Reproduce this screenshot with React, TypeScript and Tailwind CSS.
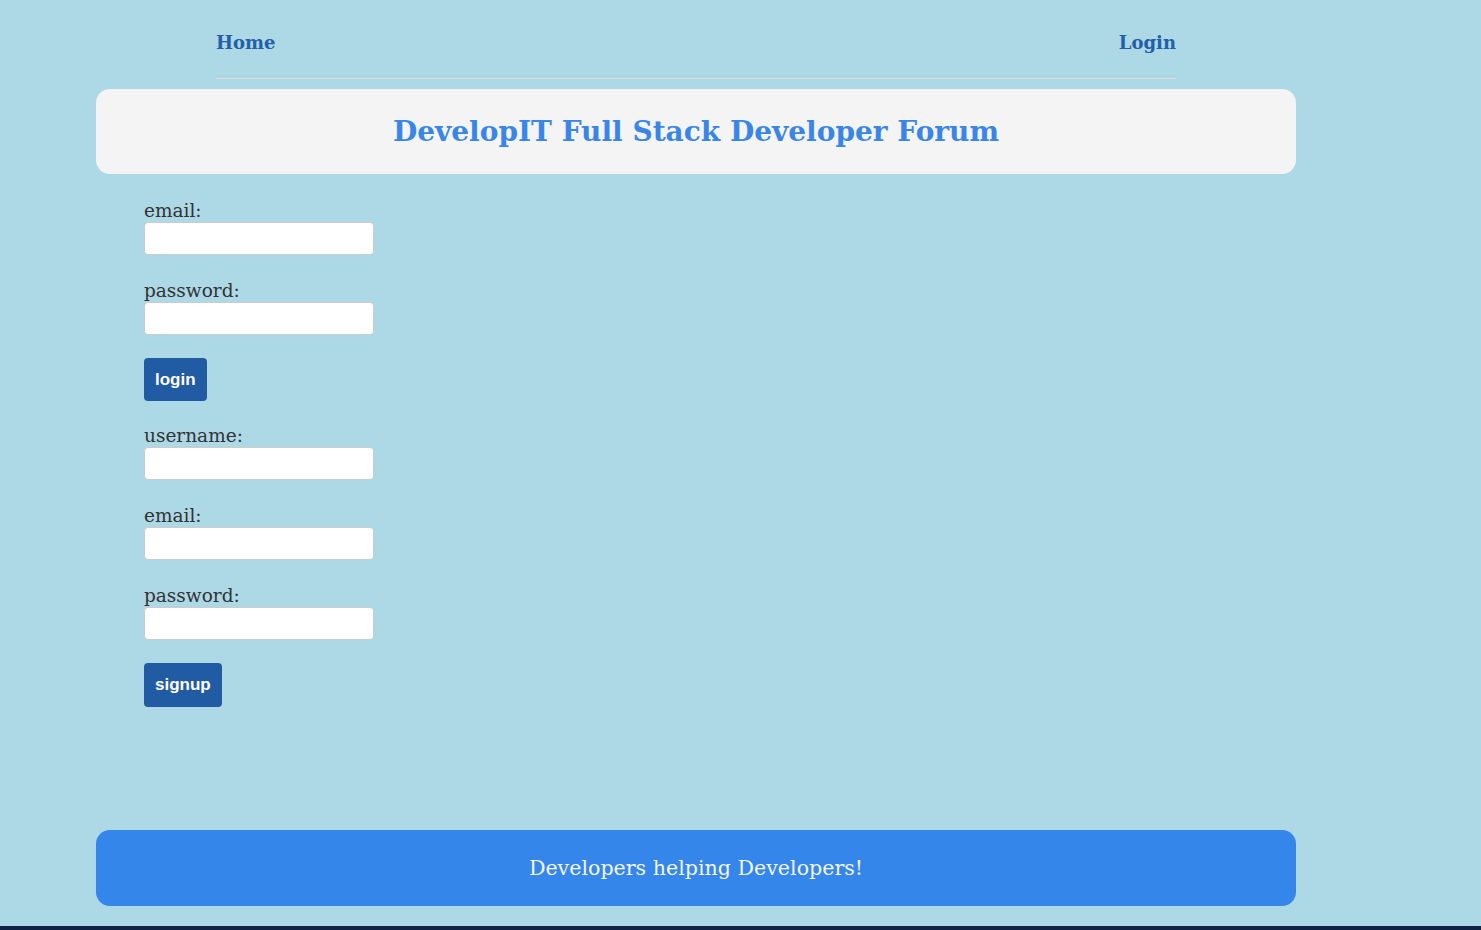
import React from "react";

const serif = { fontFamily: '"DejaVu Serif", "Liberation Serif", serif' };

function Field({ label, className = "" }: { label: string; className?: string }) {
  return (
    <div className={"flex flex-col " + className}>
      <label className="text-[18.5px] leading-[21px] text-[#333]">{label}</label>
      <input
        type="text"
        className="mt-[1px] h-[33px] w-[230px] rounded-[4px] border border-[#ccc] bg-white"
      />
    </div>
  );
}

function Btn({ children, className = "" }: { children: React.ReactNode; className?: string }) {
  return (
    <button
      className={
        "self-start rounded-[4px] bg-[#215ba3] px-[11px] h-[43px] text-[17px] font-bold text-white " +
        className
      }
      style={{ fontFamily: '"Liberation Sans", Arial, sans-serif' }}
    >
      {children}
    </button>
  );
}

export default function App() {
  return (
    <div className="relative min-h-[930px] bg-[#add8e6]" style={serif}>
      <div className="ml-[96px] w-[1200px]">
        <nav className="mx-[120px] flex h-[79px] items-center justify-between border-b border-[#dcdcdc] pt-[6px]">
          <a className="text-[18px] font-bold text-[#2260a8]">Home</a>
          <a className="text-[18px] font-bold text-[#2260a8]">Login</a>
        </nav>
        <header className="mt-[10px] flex h-[85px] items-center justify-center rounded-[14px] bg-[#f4f4f4]">
          <h1 className="text-[28px] font-bold text-[#3a86e8]">DevelopIT Full Stack Developer Forum</h1>
        </header>
        <main className="ml-[48px] flex h-[656px] flex-col pt-[26px]">
          <Field label="email:" />
          <Field label="password:" className="mt-[25px]" />
          <Btn className="mt-[23px]">login</Btn>
          <Field label="username:" className="mt-[24px]" />
          <Field label="email:" className="mt-[25px]" />
          <Field label="password:" className="mt-[25px]" />
          <Btn className="mt-[23px] h-[44px]">signup</Btn>
        </main>
        <footer className="flex h-[76px] items-center justify-center rounded-[14px] bg-[#3486eb]">
          <p className="text-[20.6px] text-[#f4f4f4]">Developers helping Developers!</p>
        </footer>
      </div>
      <div className="absolute bottom-0 left-0 h-[4px] w-full bg-[#0f2347]" />
    </div>
  );
}
